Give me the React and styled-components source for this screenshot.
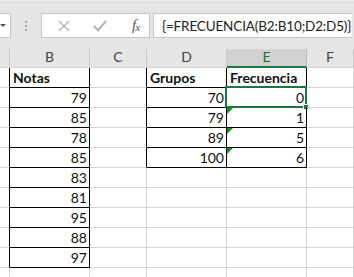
import styled, { createGlobalStyle } from 'styled-components';

const GlobalStyle = createGlobalStyle`
  html, body { margin: 0; padding: 0; background: #fff; }
  body { font-family: Lato, "Open Sans", sans-serif; }
`;

const Page = styled.div`
  width: 354px;
  height: 277px;
  overflow: hidden;
  background: #fff;
`;

const TopStrip = styled.div`
  height: 2px;
  background: #ececec;
`;

const Toolbar = styled.div`
  display: flex;
  align-items: flex-start;
  height: 46px;
  box-sizing: border-box;
  padding-top: 10px;
  background: #e6e6e6;
  border-top: 1px solid #d4d4d4;
`;

const NameBox = styled.div`
  width: 11px;
  height: 25px;
  box-sizing: border-box;
  background: #fff;
  border: 1px solid #c6c6c6;
  border-left: none;
  display: flex;
  align-items: center;
  justify-content: flex-end;
  padding-right: 4px;
`;

const Arrow = styled.div`
  width: 0;
  height: 0;
  border-left: 3px solid transparent;
  border-right: 3px solid transparent;
  border-top: 3px solid #555;
`;

const Dots = styled.div`
  width: 30px;
  height: 25px;
  display: flex;
  flex-direction: column;
  align-items: center;
  justify-content: center;
  gap: 2px;
  & span {
    width: 2px;
    height: 2px;
    background: #a8a8a8;
  }
`;

const ButtonsBox = styled.div`
  width: 109px;
  height: 25px;
  box-sizing: border-box;
  background: #fff;
  border: 1px solid #c6c6c6;
  display: flex;
  align-items: center;
  padding-left: 12px;
  gap: 17px;
`;

const ToolButton = styled.div`
  width: 19px;
  height: 19px;
  display: flex;
  align-items: center;
  justify-content: center;
  color: ${p => p.$color || '#b4b4b4'};
`;

const Fx = styled.span`
  font-family: "Liberation Serif", serif;
  font-style: italic;
  font-size: 15px;
  color: #555;
  letter-spacing: -1px;
  & sub { font-size: 11px; vertical-align: -1px; }
`;

const FormulaBox = styled.div`
  flex: 1;
  height: 25px;
  margin-left: 3px;
  margin-right: 2px;
  box-sizing: border-box;
  background: #fff;
  border: 1px solid #c6c6c6;
  border-right: none;
  display: flex;
  align-items: center;
  padding-left: 8px;
  font-size: 13.5px;
  letter-spacing: -0.15px;
  color: #222;
  white-space: nowrap;
`;

const Sheet = styled.div`
  display: grid;
  grid-template-columns: 10px 80px 57px 80px 80px 1fr;
  grid-auto-rows: 20px;
`;

const HeadCell = styled.div`
  box-sizing: border-box;
  background: ${p => (p.$active ? '#d2d2d2' : '#e6e6e6')};
  border-right: 1px solid ${p => (p.$active ? '#bdbdbd' : '#c8c8c8')};
  border-bottom: ${p => (p.$active ? '2px solid #217346' : '1px solid #d4d4d4')};
  color: ${p => (p.$active ? '#1e6b3c' : '#444')};
  font-size: 14px;
  display: flex;
  align-items: flex-end;
  justify-content: center;
  padding-bottom: ${p => (p.$active ? '1px' : '2px')};
  position: relative;
  &::before {
    content: '';
    position: absolute;
    left: 0;
    right: -1px;
    top: 0;
    height: 1px;
    background: #e6e6e6;
  }
`;

const Cell = styled.div`
  position: relative;
  box-sizing: border-box;
  border-right: 1px solid ${p => (p.$rb ? '#000' : '#d4d4d4')};
  border-bottom: 1px solid ${p => (p.$bb ? '#000' : '#d4d4d4')};
  display: flex;
  align-items: flex-end;
  justify-content: ${p => (p.$num ? 'flex-end' : 'flex-start')};
  padding: 0 2px 1px 3px;
  font-size: 14px;
  font-weight: ${p => (p.$bold ? 700 : 400)};
  color: #111;
  white-space: nowrap;
`;

const Selection = styled.div`
  position: absolute;
  left: -2px;
  top: -2px;
  width: 82px;
  height: 22px;
  box-sizing: border-box;
  border: 2px solid #217346;
  pointer-events: none;
`;

const FillHandle = styled.div`
  position: absolute;
  right: -4px;
  bottom: -4px;
  width: 6px;
  height: 6px;
  box-sizing: border-box;
  background: #217346;
  border: 1px solid #fff;
`;

const ErrorMark = styled.div`
  position: absolute;
  left: 0;
  top: 0;
  width: 0;
  height: 0;
  border-top: 6px solid #1f8a2c;
  border-right: 6px solid transparent;
`;

const columns = ['', 'B', 'C', 'D', 'E', 'F'];

const notas = [79, 85, 78, 85, 83, 81, 95, 88, 97];
const grupos = [70, 79, 89, 100];
const frecuencia = [0, 1, 5, 6];

const inBox = (c, r) =>
  (c === 1 && r >= 1 && r <= 10) || ((c === 3 || c === 4) && r >= 1 && r <= 5);

const valueAt = (c, r) => {
  if (c === 1) {
    if (r === 1) return { text: 'Notas', bold: true };
    if (r >= 2 && r <= 10) return { text: notas[r - 2], num: true };
  }
  if (c === 3) {
    if (r === 1) return { text: 'Grupos', bold: true };
    if (r >= 2 && r <= 5) return { text: grupos[r - 2], num: true };
  }
  if (c === 4) {
    if (r === 1) return { text: 'Frecuencia', bold: true };
    if (r >= 2 && r <= 5) return { text: frecuencia[r - 2], num: true };
  }
  return null;
};

export default function App() {
  const rows = [];
  for (let r = 1; r <= 11; r++) {
    for (let c = 0; c < columns.length; c++) {
      const v = valueAt(c, r);
      rows.push(
        <Cell
          key={`${c}-${r}`}
          $rb={inBox(c, r) || inBox(c + 1, r)}
          $bb={inBox(c, r) || inBox(c, r + 1)}
          $num={v && v.num}
          $bold={v && v.bold}
        >
          {v && v.text}
          {c === 4 && r === 2 && (
            <Selection>
              <FillHandle />
            </Selection>
          )}
          {c === 4 && r >= 3 && r <= 5 && <ErrorMark />}
        </Cell>
      );
    }
  }

  return (
    <Page>
      <GlobalStyle />
      <TopStrip />
      <Toolbar>
        <NameBox>
          <Arrow />
        </NameBox>
        <Dots>
          <span />
          <span />
          <span />
        </Dots>
        <ButtonsBox>
          <ToolButton>
            <svg width="12" height="12" viewBox="0 0 12 12">
              <path d="M1 1 L11 11 M11 1 L1 11" stroke="currentColor" strokeWidth="1.4" fill="none" />
            </svg>
          </ToolButton>
          <ToolButton>
            <svg width="14" height="12" viewBox="0 0 14 12">
              <path d="M1 6 L5 10.5 L13 1" stroke="currentColor" strokeWidth="2" fill="none" />
            </svg>
          </ToolButton>
          <ToolButton>
            <Fx>f<sub>x</sub></Fx>
          </ToolButton>
        </ButtonsBox>
        <FormulaBox>{'{=FRECUENCIA(B2:B10;D2:D5)}'}</FormulaBox>
      </Toolbar>
      <Sheet>
        {columns.map((col, i) => (
          <HeadCell key={i} $active={col === 'E'}>
            {col}
          </HeadCell>
        ))}
        {rows}
      </Sheet>
    </Page>
  );
}
